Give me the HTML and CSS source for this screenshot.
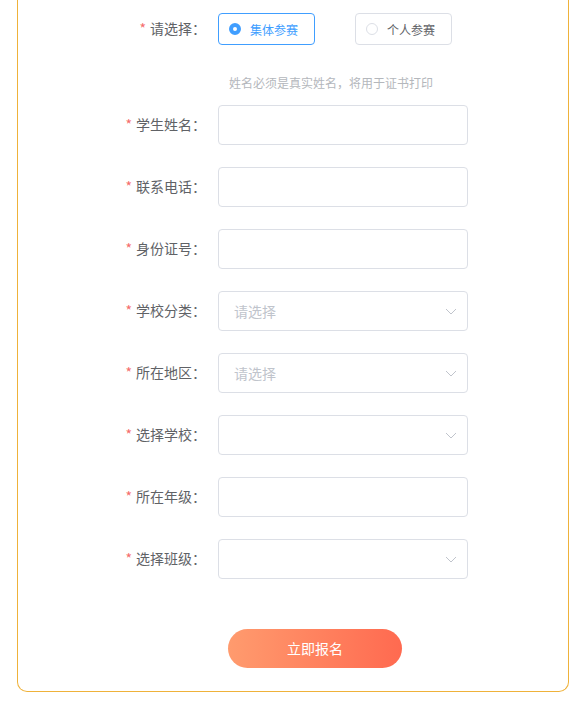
FILE: index.html
```html
<!DOCTYPE html>
<html lang="zh-CN">
<head>
  <meta charset="UTF-8">
  <meta name="viewport" content="width=device-width, initial-scale=1.0">
  <title>报名</title>
  <link rel="stylesheet" href="styles.css">
</head>
<body>

<div class="page">
  <div class="card">
    <form class="form">
      <div class="item item-radio">
        <label class="label"><span class="star">*</span>请选择：</label>
        <div class="content radios">
          <label class="radio radio-checked"><span class="dot"></span>集体参赛</label>
          <label class="radio"><span class="dot"></span>个人参赛</label>
        </div>
      </div>

      <div class="hint">姓名必须是真实姓名，将用于证书打印</div>

      <div class="item">
        <label class="label"><span class="star">*</span>学生姓名：</label>
        <div class="content"><input class="input" type="text"></div>
      </div>
      <div class="item">
        <label class="label"><span class="star">*</span>联系电话：</label>
        <div class="content"><input class="input" type="text"></div>
      </div>
      <div class="item">
        <label class="label"><span class="star">*</span>身份证号：</label>
        <div class="content"><input class="input" type="text"></div>
      </div>
      <div class="item">
        <label class="label"><span class="star">*</span>学校分类：</label>
        <div class="content select">
          <input class="input" type="text" placeholder="请选择" readonly>
          <svg class="arrow" width="12" height="7" viewBox="0 0 12 7"><path d="M1 1l5 5 5-5" fill="none" stroke="#c0c4cc" stroke-width="1"/></svg>
        </div>
      </div>
      <div class="item">
        <label class="label"><span class="star">*</span>所在地区：</label>
        <div class="content select">
          <input class="input" type="text" placeholder="请选择" readonly>
          <svg class="arrow" width="12" height="7" viewBox="0 0 12 7"><path d="M1 1l5 5 5-5" fill="none" stroke="#c0c4cc" stroke-width="1"/></svg>
        </div>
      </div>
      <div class="item">
        <label class="label"><span class="star">*</span>选择学校：</label>
        <div class="content select">
          <input class="input" type="text" readonly>
          <svg class="arrow" width="12" height="7" viewBox="0 0 12 7"><path d="M1 1l5 5 5-5" fill="none" stroke="#c0c4cc" stroke-width="1"/></svg>
        </div>
      </div>
      <div class="item">
        <label class="label"><span class="star">*</span>所在年级：</label>
        <div class="content"><input class="input" type="text"></div>
      </div>
      <div class="item">
        <label class="label"><span class="star">*</span>选择班级：</label>
        <div class="content select">
          <input class="input" type="text" readonly>
          <svg class="arrow" width="12" height="7" viewBox="0 0 12 7"><path d="M1 1l5 5 5-5" fill="none" stroke="#c0c4cc" stroke-width="1"/></svg>
        </div>
      </div>

      <div class="actions">
        <button class="btn" type="button">立即报名</button>
      </div>
    </form>
  </div>
</div>

</body>
</html>
```

FILE: styles.css
```css
body {
  margin: 0;
  padding: 0;
  font-family: "Microsoft YaHei", "Noto Sans CJK SC", sans-serif;
  background: #fff;
}
.page {
  padding: 0 16px 15px 17px;
}
.card {
  border: 1px solid #efb23a;
  border-top: 0;
  border-radius: 0 0 10px 10px;
  padding: 13px 0 23px;
}
.item {
  display: flex;
  align-items: center;
  height: 40px;
  margin-bottom: 22px;
}
.item-radio {
  height: 32px;
  margin-bottom: 0;
}
.label {
  width: 200px;
  box-sizing: border-box;
  padding-right: 12px;
  padding-bottom: 2px;
  text-align: right;
  font-size: 14px;
  color: #606266;
}
.star {
  color: #f56c6c;
  margin-right: 4px;
}
.content {
  width: 250px;
}
.radios {
  display: flex;
  gap: 40px;
  width: auto;
}
.radio {
  display: flex;
  align-items: center;
  height: 32px;
  box-sizing: border-box;
  padding: 0 16px 0 10px;
  border: 1px solid #dcdfe6;
  border-radius: 4px;
  font-size: 12px;
  color: #606266;
}
.dot {
  width: 12px;
  height: 12px;
  box-sizing: border-box;
  border: 1px solid #dcdfe6;
  border-radius: 50%;
  margin-right: 9px;
}
.radio-checked {
  border-color: #409eff;
  color: #409eff;
}
.radio-checked .dot {
  border: 4px solid #409eff;
  background: #fff;
}
.hint {
  margin: 28px 0 12px 211px;
  line-height: 20px;
  font-size: 12px;
  color: #b4b7bc;
}
.input {
  display: block;
  width: 100%;
  height: 40px;
  box-sizing: border-box;
  padding: 0 15px;
  border: 1px solid #dcdfe6;
  border-radius: 4px;
  font-family: inherit;
  font-size: 14px;
  color: #606266;
  outline: none;
}
.input::placeholder {
  color: #c0c4cc;
}
.select {
  position: relative;
}
.arrow {
  position: absolute;
  right: 11px;
  top: 17px;
}
.actions {
  padding: 28px 0 0 210px;
}
.btn {
  width: 174px;
  height: 39px;
  padding: 0 0 2px;
  border: none;
  border-radius: 20px;
  background: linear-gradient(90deg, #ff9b6e, #ff6a50);
  color: #fff;
  font-family: inherit;
  font-size: 14px;
  cursor: pointer;
}
```
